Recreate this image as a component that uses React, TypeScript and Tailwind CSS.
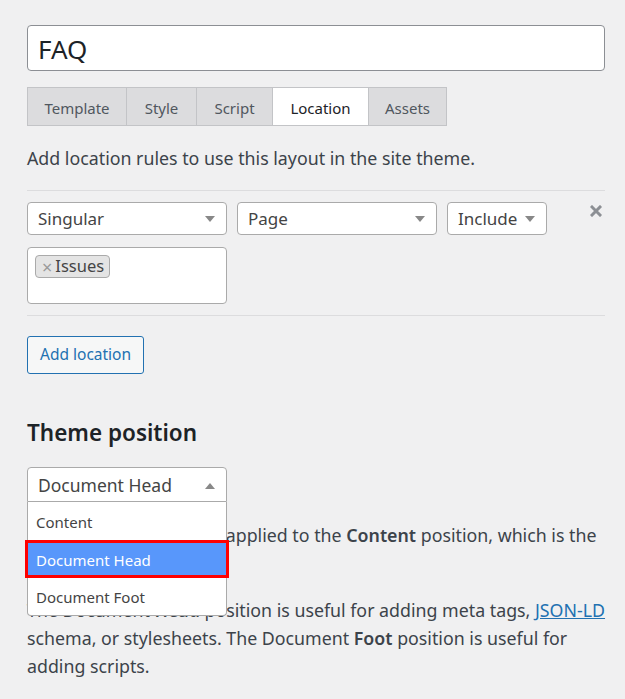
import { useState } from "react";

type Opt = { label: string; h: string };

const positions: Opt[] = [
    { label: "Content", h: "h-[38px]" },
    { label: "Document Head", h: "h-[38px]" },
    { label: "Document Foot", h: "h-[37px]" },
];

const tabs = [
    { name: "Template", w: "w-[100px]" },
    { name: "Style", w: "w-[71px]" },
    { name: "Script", w: "w-[77px]" },
    { name: "Location", w: "w-[97px]" },
    { name: "Assets", w: "w-[79px]" },
];

function Arrow({ up }: { up?: boolean }) {
    return (
        <svg width="10" height="6" viewBox="0 0 10 6" className="shrink-0">
            {up ? <path d="M0 6 L5 0 L10 6 Z" fill="#888" /> : <path d="M0 0 L10 0 L5 6 Z" fill="#888" />}
        </svg>
    );
}

function Select({ value, width }: { value: string; width: string }) {
    return (
        <div className={`flex items-center justify-between h-[33px] ${width} bg-white border border-[#aaa] rounded-[4px] pl-[10px] pr-[11px] text-[17px] text-[#444]`}>
            <span className="leading-none">{value}</span>
            <Arrow />
        </div>
    );
}

export default function App() {
    const [active] = useState("Location");
    return (
        <div className="min-h-screen w-[625px] bg-[#f0f0f1] pl-[27px] pr-[20px] pt-[25px] font-['Noto_Sans','Open_Sans',sans-serif] text-[#3c434a]">
            <div className="flex items-center h-[46px] bg-white border border-[#8c8f94] rounded-[4px] px-[10px] pt-[3px] text-[26px] text-[#1d2327]">
                FAQ
            </div>

            <div className="flex mt-[16px]">
                {tabs.map((t, i) => (
                    <div
                        key={t.name}
                        className={`${t.w} h-[39px] pt-[4px] flex items-center justify-center border border-[#c3c4c7] text-[15px] ${i > 0 ? "-ml-px" : ""} ${t.name === active ? "bg-white text-[#1d2327]" : "bg-[#dcdcde] text-[#50575e]"}`}
                    >
                        {t.name}
                    </div>
                ))}
            </div>

            <p className="mt-[18px] text-[17.8px] leading-[28px]">Add location rules to use this layout in the site theme.</p>

            <div className="mt-[18px] border-t border-[#dcdcde] pt-[11px] pb-[11px]">
                <div className="flex items-start">
                    <div className="flex gap-[10px]">
                        <Select value="Singular" width="w-[200px]" />
                        <Select value="Page" width="w-[200px]" />
                        <Select value="Include" width="w-[100px]" />
                    </div>
                    <svg width="12" height="12" viewBox="0 0 12 12" className="ml-auto mr-[3px] mt-[3px]">
                        <path d="M2 2 L10 10 M10 2 L2 10" stroke="#8c8f94" strokeWidth="3" strokeLinecap="square" />
                    </svg>
                </div>
                <div className="mt-[12px] w-[200px] h-[57px] bg-white border border-[#aaa] rounded-[4px] pt-[7px] pl-[7px]">
                    <span className="inline-flex items-center h-[23px] pl-[6px] pr-[5px] bg-[#e4e4e4] border border-[#aaa] rounded-[4px] text-[16.5px] text-[#444] leading-none">
                        <span className="text-[#999] mr-[3px] text-[18px]">×</span>Issues
                    </span>
                </div>
            </div>

            <div className="border-t border-[#dcdcde] pt-[20px]">
                <button className="h-[38px] px-[12px] bg-[#f6f7f7] border border-[#2271b1] rounded-[3px] text-[#2271b1] text-[15.5px]">
                    Add location
                </button>
            </div>

            <h2 className="mt-[44px] text-[22.5px] leading-[30px] font-semibold text-[#1d2327]">Theme position</h2>

            <div className="relative mt-[19px]">
                <div className="flex items-center justify-between w-[200px] h-[35px] bg-white border border-[#aaa] rounded-t-[4px] pl-[10px] pr-[11px] pt-[2px] text-[17.5px] text-[#444]">
                    <span className="leading-none">Document Head</span>
                    <Arrow up />
                </div>
                <ul className="absolute left-0 top-[35px] w-[200px] bg-white border border-[#aaa] border-t-0 rounded-b-[4px] z-10">
                    {positions.map((p) => (
                        <li
                            key={p.label}
                            className={`${p.h} pt-[2px] flex items-center text-[15px] ${p.label === "Document Head" ? "bg-[#5897fb] text-white border-[3px] border-[#ff0000] -mx-[3px] pl-[8px]" : "text-[#444] pl-[8px]"}`}
                        >
                            {p.label}
                        </li>
                    ))}
                </ul>

                <p className="mt-[19px] text-[17.8px] leading-[28px] whitespace-nowrap">
                    Layouts are, by default, applied to the <strong className="font-semibold">Content</strong> position, which is the
                    <br />
                    default.
                </p>
                <p className="mt-[19px] text-[17.8px] leading-[28px] whitespace-nowrap">
                    The Document <strong className="font-semibold">Head</strong> position is useful for adding meta tags,{" "}
                    <a className="text-[#2271b1] underline">JSON-LD</a>
                    <br />
                    schema, or stylesheets. The Document <strong className="font-semibold">Foot</strong> position is useful for
                    <br />
                    adding scripts.
                </p>
            </div>
        </div>
    );
}
